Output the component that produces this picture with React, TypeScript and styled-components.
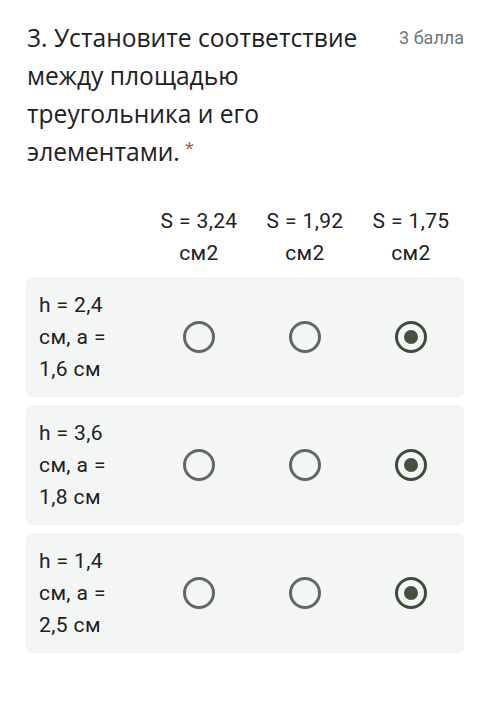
import React from 'react';
import styled, { createGlobalStyle } from 'styled-components';

const Global = createGlobalStyle`
  body {
    margin: 0;
    background: #ffffff;
    font-family: Roboto, "Noto Sans", sans-serif;
    color: #202124;
  }
`;

const Page = styled.div`
  padding: 19px 36px 40px 26px;
`;

const Head = styled.div`
  display: flex;
  align-items: flex-start;
  justify-content: space-between;
  padding-left: 1px;
`;

const Title = styled.div<{ $required?: boolean }>`
  width: 362px;
  font-family: "Open Sans", sans-serif;
  font-size: 24.6px;
  line-height: 38px;
  color: #202124;
  &::after {
    content: ${(p) => (p.$required ? "'*'" : "''")};
    color: #c5402f;
    font-size: 17px;
    vertical-align: top;
    line-height: 30px;
    margin-left: 5px;
  }
`;

const Points = styled.div`
  font-family: Roboto, sans-serif;
  font-size: 18px;
  line-height: 38px;
  color: #70757a;
`;

const Grid = styled.div`
  display: grid;
  grid-template-columns: 120px repeat(3, 106px);
  margin-top: 34px;
`;

const ColHead = styled.div`
  text-align: center;
  font-size: 21px;
  letter-spacing: 0.4px;
  line-height: 32px;
  white-space: pre-line;
`;

const Row = styled.div`
  grid-column: 1 / -1;
  display: grid;
  grid-template-columns: 120px repeat(3, 106px);
  align-items: center;
  background: #f3f6f4;
  border-radius: 5px;
  padding: 12px 0;
  margin-top: 8px;
  &:first-of-type {
    margin-top: 9px;
  }
`;

const RowLabel = styled.div`
  padding-left: 13px;
  font-size: 21px;
  letter-spacing: 0.4px;
  line-height: 32px;
  white-space: pre-line;
`;

const Cell = styled.div`
  display: flex;
  justify-content: center;
`;

const Radio = styled.div<{ $on?: boolean }>`
  width: 26px;
  height: 26px;
  border-radius: 50%;
  border: 3px solid ${(p) => (p.$on ? '#414b3a' : '#626665')};
  display: flex;
  align-items: center;
  justify-content: center;
  &::after {
    content: '';
    display: ${(p) => (p.$on ? 'block' : 'none')};
    width: 14px;
    height: 14px;
    border-radius: 50%;
    background: #46523e;
  }
`;

const cols = ['S = 3,24\nсм2', 'S = 1,92\nсм2', 'S = 1,75\nсм2'];
const rows = [
  'h = 2,4\nсм, а =\n1,6 см',
  'h = 3,6\nсм, а =\n1,8 см',
  'h = 1,4\nсм, а =\n2,5 см',
];

export default function App() {
  return (
    <Page>
      <Global />
      <Head>
        <Title $required>
          3. Установите соответствие между площадью треугольника и его элементами.
        </Title>
        <Points>3 балла</Points>
      </Head>
      <Grid>
        <div />
        {cols.map((c) => (
          <ColHead key={c}>{c}</ColHead>
        ))}
        {rows.map((r) => (
          <Row key={r}>
            <RowLabel>{r}</RowLabel>
            {cols.map((c, i) => (
              <Cell key={c}>
                <Radio $on={i === 2} />
              </Cell>
            ))}
          </Row>
        ))}
      </Grid>
    </Page>
  );
}
